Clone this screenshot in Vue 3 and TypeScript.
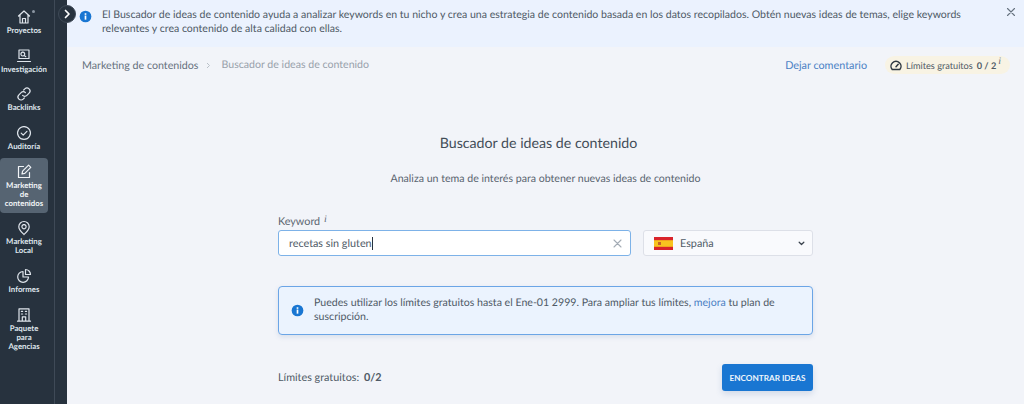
<script setup lang="ts">
interface NavItem {
  lines: string[]
  icon: string
  active?: boolean
  dot?: boolean
}

const navItems: NavItem[] = [
  { lines: ['Proyectos'], icon: 'M3.5 8 9 3l5.5 5M5 7v8h8V7M7.5 15v-4.5h3V15', dot: true },
  { lines: ['Investigación'], icon: 'M4 3h10v8.5H4zM2.5 14.5h13M7.8 5.2a1.9 1.9 0 1 0 .01 0M9.2 8.4l1.6 1.3' },
  { lines: ['Backlinks'], icon: 'M7.6 10.4a3 3 0 0 0 4.3 0l2.2-2.2a3 3 0 0 0-4.3-4.3L8.7 5M10.4 7.6a3 3 0 0 0-4.3 0L3.9 9.8a3 3 0 0 0 4.3 4.3L9.3 13' },
  { lines: ['Auditoría'], icon: 'M9 2.6a6.4 6.4 0 1 0 .01 0M6.2 9.2l2 2 3.7-3.9' },
  { lines: ['Marketing', 'de', 'contenidos'], icon: 'M8.5 3.5H3.5v11h11V9.5M7 11l.6-2.8 6-6 2.2 2.2-6 6z', active: true },
  { lines: ['Marketing', 'Local'], icon: 'M9 2.5a5.2 5.2 0 0 0-5.2 5.2c0 3.2 3 5.7 5.2 7.8 2.2-2.1 5.2-4.6 5.2-7.8A5.2 5.2 0 0 0 9 2.5zM9 5.6a2.1 2.1 0 1 0 .01 0' },
  { lines: ['Informes'], icon: 'M8 4.5a5.4 5.4 0 1 0 5.5 5.5H8zM10.5 2.5v5h5a5 5 0 0 0-5-5z' },
  { lines: ['Paquete', 'para', 'Agencias'], icon: 'M4 2.8h10v12.4H4zM2.5 15.2h13M6.4 5.4h1.2M10.4 5.4h1.2M6.4 8h1.2M10.4 8h1.2M7.3 15v-4.2h3.4V15' }
]
</script>

<template>
  <div class="app-shell">
    <aside class="sidebar">
      <nav class="nav-rail">
        <div v-for="item in navItems" :key="item.lines[0] + item.lines.length" class="nav-item" :class="{ active: item.active }">
          <span v-if="item.dot" class="nav-dot"></span>
          <svg class="nav-icon" viewBox="0 0 18 18" fill="none" stroke="currentColor" stroke-width="1.2" stroke-linecap="round" stroke-linejoin="round">
            <path :d="item.icon" />
          </svg>
          <span v-for="line in item.lines" :key="line" class="nav-line">{{ line }}</span>
        </div>
      </nav>
    </aside>

    <button class="collapse-btn" type="button">
      <svg width="8" height="10" viewBox="0 0 8 10" fill="none" stroke="#fff" stroke-width="1.7" stroke-linecap="round" stroke-linejoin="round"><path d="M2.5 1.5 6 5 2.5 8.5" /></svg>
    </button>

    <main class="page">
      <section class="banner">
        <svg class="info-icon banner-icon" viewBox="0 0 14 14"><circle cx="7" cy="7" r="6.3" fill="#1976d2" /><rect x="6.1" y="6" width="1.8" height="4.4" fill="#fff" /><rect x="6.1" y="3.5" width="1.8" height="1.7" fill="#fff" /></svg>
        <p class="banner-text">El Buscador de ideas de contenido ayuda a analizar keywords en tu nicho y crea una estrategia de contenido basada en los datos recopilados. Obtén nuevas ideas de temas, elige keywords relevantes y crea contenido de alta calidad con ellas.</p>
        <svg class="banner-close" width="10" height="10" viewBox="0 0 10 10" stroke="#66727f" stroke-width="1.1" stroke-linecap="round"><path d="M1.5 1.5l7 7M8.5 1.5l-7 7" /></svg>
      </section>

      <header class="crumbs-bar">
        <span class="crumb">Marketing de contenidos</span>
        <svg class="crumb-sep" width="5" height="7" viewBox="0 0 5 7" fill="none" stroke="#b9c0c8" stroke-width="1"><path d="M1 1l2.5 2.5L1 6" /></svg>
        <span class="crumb current">Buscador de ideas de contenido</span>
        <a class="feedback">Dejar comentario</a>
        <div class="limits-chip">
          <svg width="12" height="11" viewBox="0 0 12 11" fill="none" stroke="#2f3842" stroke-width="1.5" stroke-linecap="round"><path d="M2.2 9.6a5 5 0 1 1 7.6 0zM6 6.8l2.2-2.6" /></svg>
          <span class="chip-label">Límites gratuitos</span>
          <b class="chip-count">0 / 2</b><i class="hint chip-hint">i</i>
        </div>
      </header>

      <section class="finder">
        <h1 class="title">Buscador de ideas de contenido</h1>
        <p class="subtitle">Analiza un tema de interés para obtener nuevas ideas de contenido</p>

        <div class="form">
          <div class="fields">
            <div class="keyword-field">
              <label class="field-label">Keyword <i class="hint">i</i></label>
              <div class="keyword-input">
                <span class="keyword-value">recetas sin gluten</span><span class="caret"></span>
                <svg class="clear-icon" width="9" height="9" viewBox="0 0 9 9" stroke="#a4acb5" stroke-width="1.1" stroke-linecap="round"><path d="M1 1l7 7M8 1L1 8" /></svg>
              </div>
            </div>
            <div class="country-select">
              <svg class="flag" width="19" height="13" viewBox="0 0 19 13">
                <rect width="19" height="13" fill="#d9242b" />
                <rect y="3.2" width="19" height="6.6" fill="#f8c41f" />
                <rect x="4" y="5" width="3" height="3" fill="#c4632b" />
              </svg>
              <span class="country-name">España</span>
              <svg class="chevron" width="7" height="5" viewBox="0 0 8 6" fill="none" stroke="#3a434d" stroke-width="1.5" stroke-linecap="round" stroke-linejoin="round"><path d="M1.2 1.5 4 4.2l2.8-2.7" /></svg>
            </div>
          </div>

          <div class="notice">
            <svg class="info-icon notice-icon" viewBox="0 0 14 14"><circle cx="7" cy="7" r="6.3" fill="#1976d2" /><rect x="6.1" y="6" width="1.8" height="4.4" fill="#fff" /><rect x="6.1" y="3.5" width="1.8" height="1.7" fill="#fff" /></svg>
            <p class="notice-text">Puedes utilizar los límites gratuitos hasta el Ene-01 2999. Para ampliar tus límites, <a class="link">mejora</a> tu plan de suscripción.</p>
          </div>

          <div class="actions">
            <span class="limits-text">Límites gratuitos: <b>0/2</b></span>
            <button class="submit" type="button">ENCONTRAR IDEAS</button>
          </div>
        </div>
      </section>
    </main>
  </div>
</template>

<style>
html,
body {
  margin: 0;
  background: #f2f4f9;
}
</style>

<style scoped>
.app-shell {
  position: relative;
  display: flex;
  width: 1024px;
  height: 404px;
  overflow: hidden;
  font-family: Lato, "Noto Sans", sans-serif;
  text-rendering: geometricPrecision;
  color: #4f5a66;
}

.sidebar {
  flex: none;
  width: 67px;
  height: 100%;
  box-sizing: border-box;
  background: #27323e;
}

.nav-rail {
  width: 55px;
  height: 100%;
  box-sizing: border-box;
  padding-top: 3.5px;
  border-right: 1px solid #3f4a57;
  display: flex;
  flex-direction: column;
  gap: 1.7px;
}

.nav-item {
  position: relative;
  width: 48px;
  box-sizing: border-box;
  padding: 4.5px 0 5.5px;
  display: flex;
  flex-direction: column;
  align-items: center;
  border-radius: 4px;
  color: #dfe5ec;
}

.nav-item.active {
  background: #566472;
  color: #f1f4f7;
}

.nav-dot {
  position: absolute;
  left: 32px;
  top: 6px;
  width: 3px;
  height: 3px;
  border-radius: 50%;
  background: #8b96a2;
}

.nav-icon {
  width: 18px;
  height: 18px;
}

.nav-line {
  font-size: 7.8px;
  font-weight: 700;
  line-height: 9px;
  white-space: nowrap;
}

.collapse-btn {
  position: absolute;
  left: 58px;
  top: 5px;
  width: 18px;
  height: 18px;
  padding: 0;
  display: flex;
  align-items: center;
  justify-content: center;
  border: 1px solid #3f4a57;
  border-radius: 50%;
  background: #27323e;
}

.page {
  flex: 1;
  min-width: 0;
  display: flex;
  flex-direction: column;
  background: #f2f4f9;
}

.banner {
  height: 47px;
  box-sizing: border-box;
  padding: 8px 8px 0 12px;
  display: flex;
  align-items: flex-start;
  background: #ebf2fe;
}

.info-icon {
  flex: none;
  width: 13px;
  height: 13px;
}

.banner-icon {
  margin: 2px 10px 0 0;
}

.banner-text {
  flex: 1;
  margin: 0;
  font-size: 10.55px;
  line-height: 14px;
  color: #4f5a66;
}

.banner-close {
  flex: none;
  margin: -1px 0 0 40px;
}

.crumbs-bar {
  height: 36px;
  box-sizing: border-box;
  padding: 0 14px 0 15px;
  display: flex;
  align-items: center;
}

.crumb {
  font-size: 10.7px;
  color: #66717d;
}

.crumb.current {
  font-size: 10.6px;
  color: #98a1ab;
}

.crumb-sep {
  margin: 0 11px 0 7px;
}

.feedback {
  margin-left: auto;
  font-size: 10.8px;
  color: #4a80c4;
}

.limits-chip {
  margin-left: 18px;
  height: 18px;
  padding: 0 9px 0 5px;
  display: flex;
  align-items: center;
  border-radius: 9px;
  background: #f8f3e4;
  font-size: 9.2px;
  color: #4f5a66;
}

.chip-label {
  margin-left: 4px;
}

.chip-count {
  margin-left: 4px;
  font-weight: 700;
}

.hint {
  font-family: "Liberation Serif", serif;
  font-size: 10px;
  color: #5e6975;
}

.chip-hint {
  margin: -7px 0 0 2px;
}

.finder {
  flex: 1;
  display: flex;
  flex-direction: column;
  align-items: center;
}

.title {
  margin: 50px 14px 0 0;
  font-size: 14.2px;
  line-height: 22px;
  font-weight: 400;
  color: #434d58;
}

.subtitle {
  margin: 17px 0 0;
  font-size: 10.6px;
  line-height: 14px;
  color: #5a6570;
}

.form {
  width: 535px;
  margin-top: 29px;
}

.fields {
  display: flex;
  align-items: flex-end;
  gap: 12px;
}

.keyword-field {
  flex: 1;
}

.field-label {
  display: block;
  height: 14px;
  margin-bottom: 1px;
  font-size: 10.8px;
  line-height: 14px;
  color: #5a6570;
}

.field-label .hint {
  position: relative;
  top: -3px;
  margin-left: 1px;
}

.keyword-input {
  height: 26px;
  box-sizing: border-box;
  padding: 0 8px 0 10px;
  display: flex;
  align-items: center;
  border: 1px solid #7db2e8;
  border-radius: 3px;
  background: #fff;
  font-size: 10.8px;
  color: #4f5a66;
}

.caret {
  width: 1px;
  height: 13px;
  background: #27323e;
}

.clear-icon {
  margin-left: auto;
}

.country-select {
  flex: none;
  width: 170px;
  height: 26px;
  box-sizing: border-box;
  padding: 0 7px 0 10px;
  display: flex;
  align-items: center;
  border: 1px solid #dde0e8;
  border-radius: 3px;
  background: #f9fafd;
  font-size: 10.8px;
}

.country-name {
  margin-left: 7px;
}

.chevron {
  margin-left: auto;
}

.notice {
  height: 49px;
  margin-top: 30px;
  box-sizing: border-box;
  padding: 0 20px 2px 12px;
  display: flex;
  align-items: center;
  border: 1px solid #6ba5e6;
  border-radius: 4px;
  background: #ebf3fe;
  box-shadow: 0 2px 5px rgba(80, 110, 160, 0.16);
}

.notice-icon {
  margin: 2px 10px 0 0;
}

.notice-text {
  margin: 0;
  font-size: 10.6px;
  line-height: 14px;
  color: #4f5a66;
}

.link {
  color: #4a80c4;
}

.actions {
  margin-top: 29px;
  display: flex;
  align-items: center;
  justify-content: space-between;
}

.limits-text {
  font-size: 10.8px;
  color: #4f5a66;
}

.limits-text b {
  margin-left: 2px;
}

.submit {
  width: 91px;
  height: 27px;
  padding: 0;
  border: 0;
  border-radius: 3px;
  background: #1976d2;
  box-shadow: 0 3px 6px rgba(60, 100, 160, 0.18);
  font-family: inherit;
  font-size: 8.2px;
  font-weight: 700;
  color: #eef5fc;
}
</style>
